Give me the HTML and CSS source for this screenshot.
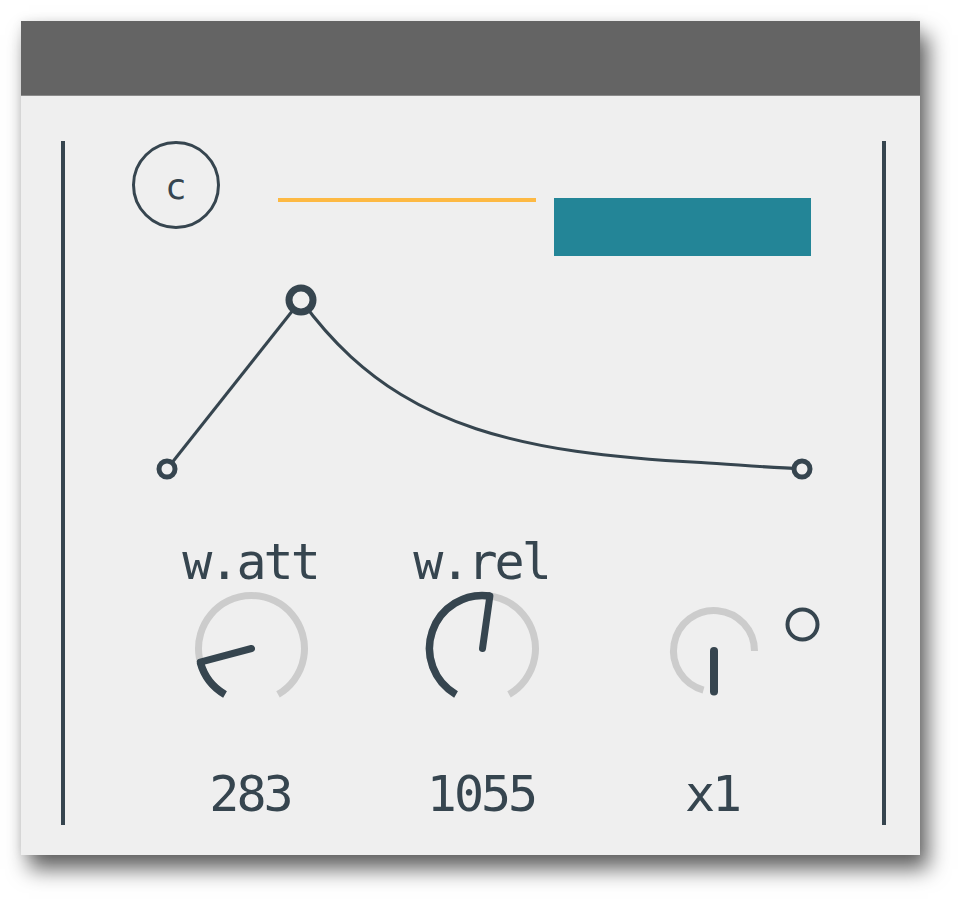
FILE: index.html
```html
<!DOCTYPE html>
<html>
<head>
<meta charset="utf-8">
<link rel="stylesheet" href="styles.css">
</head>
<body>
<div class="window">
  <div class="titlebar"></div>
  <div class="content">
    <div class="panel">
      <div class="top-row">
        <div class="c-button">c</div>
        <div class="orange-line"></div>
        <div class="teal-block"></div>
      </div>
      <svg class="envelope" width="817" height="210" viewBox="65 280 817 210">
        <path class="env-line" d="M167 469 L301 300"/>
        <path class="env-line" d="M301 300 C317.7 323.1 334.3 341.5 351 356.8 C367.7 372.1 384.3 384.3 401 394.5 C426 409.8 451 420.5 476 428.7 C509.3 439.7 542.7 446.5 576 451.3 C617.7 457.3 659.3 460.4 701 462.6 C734.7 464.4 768.3 467.8 802 468.5"/>
        <circle class="env-node" cx="167" cy="469" r="8" stroke-width="5"/>
        <circle class="env-node" cx="802" cy="469" r="8" stroke-width="5"/>
        <circle class="env-node" cx="301" cy="300" r="12" stroke-width="7"/>
      </svg>
      <div class="knob-row">
        <div class="knob-col">
          <div class="knob-label">w.att</div>
          <svg class="knob" width="231" height="120" viewBox="0 0 231 120">
            <path class="track" d="M89 103.4 A53 53 0 1 1 142 103.4"/>
            <path class="value-arc" d="M89 103.4 A53 53 0 0 1 64.3 71.2"/>
            <path class="pointer" d="M115.5 57.5 L64.3 71.2"/>
          </svg>
          <div class="knob-value">283</div>
        </div>
        <div class="knob-col">
          <div class="knob-label">w.rel</div>
          <svg class="knob" width="231" height="120" viewBox="0 0 231 120">
            <path class="track" d="M89 103.4 A53 53 0 1 1 142 103.4"/>
            <path class="value-arc" d="M89 103.4 A53 53 0 0 1 122.9 5.0"/>
            <path class="pointer" d="M115.5 57.5 L122.9 5.0"/>
          </svg>
          <div class="knob-value">1055</div>
        </div>
        <div class="knob-col">
          <div class="knob-label">&nbsp;</div>
          <svg class="knob" width="231" height="120" viewBox="0 0 231 120">
            <path class="track" d="M105.5 99.1 A40.5 40.5 0 1 1 156.5 60"/>
            <path class="pointer thick" d="M116 60 L116 100.5"/>
            <circle class="toggle" cx="204.5" cy="33.5" r="15"/>
          </svg>
          <div class="knob-value">x1</div>
        </div>
      </div>
    </div>
  </div>
</div>
</body>
</html>
```
FILE: styles.css
```css
html, body {
  margin: 0;
  padding: 0;
  background: #ffffff;
}

body {
  font-family: "DejaVu Sans Mono", "Liberation Mono", monospace;
  color: #36454f;
  padding-top: 21px;
  padding-bottom: 44px;
}

.window {
  margin-left: 21px;
  width: 899px;
  height: 834px;
  background: #efefef;
  box-shadow: 8px 14px 20px rgba(0, 0, 0, 0.62), 0 0 10px rgba(0, 0, 0, 0.08);
  display: flex;
  flex-direction: column;
}

.titlebar {
  height: 74px;
  background: #646464;
  border-bottom: 1px solid #8a8a8a;
}

.content {
  flex: 1;
  padding: 45px 0 0 40px;
}

.panel {
  width: 817px;
  height: 684px;
  border-left: 4px solid #36454f;
  border-right: 4px solid #36454f;
  display: flex;
  flex-direction: column;
}

.top-row {
  display: flex;
  align-items: flex-start;
  height: 115px;
}

.c-button {
  margin-left: 67px;
  width: 88px;
  height: 88px;
  box-sizing: border-box;
  border: 3px solid #36454f;
  border-radius: 50%;
  display: flex;
  align-items: center;
  justify-content: center;
  font-family: "DejaVu Sans", sans-serif;
  font-size: 35px;
  font-weight: normal;
  line-height: 1;
  padding-top: 4px;
}

.orange-line {
  margin-left: 58px;
  margin-top: 57px;
  width: 258px;
  height: 4px;
  background: #fdb943;
}

.teal-block {
  margin-left: 18px;
  margin-top: 57px;
  width: 257px;
  height: 58px;
  background: #238597;
}

.envelope {
  display: block;
  margin-top: 24px;
}

.env-line {
  fill: none;
  stroke: #36454f;
  stroke-width: 3;
}

.env-node {
  fill: #efefef;
  stroke: #36454f;
}

.knob-row {
  display: grid;
  grid-template-columns: repeat(3, 231px);
  padding-left: 71px;
  margin-top: 43px;
}

.knob-col {
  display: flex;
  flex-direction: column;
  align-items: center;
}

.knob-label,
.knob-value {
  font-size: 50px;
  line-height: 58px;
  height: 58px;
  letter-spacing: -3px;
  text-indent: -3px;
  white-space: nowrap;
}

.knob {
  display: block;
}

.knob-value {
  margin-top: 54px;
}

.track {
  fill: none;
  stroke: #cccccc;
  stroke-width: 7;
}

.value-arc {
  fill: none;
  stroke: #36454f;
  stroke-width: 7.5;
}

.pointer {
  fill: none;
  stroke: #36454f;
  stroke-width: 7;
  stroke-linecap: round;
}

.pointer.thick {
  stroke-width: 8;
}

.toggle {
  fill: none;
  stroke: #36454f;
  stroke-width: 4;
}
```
